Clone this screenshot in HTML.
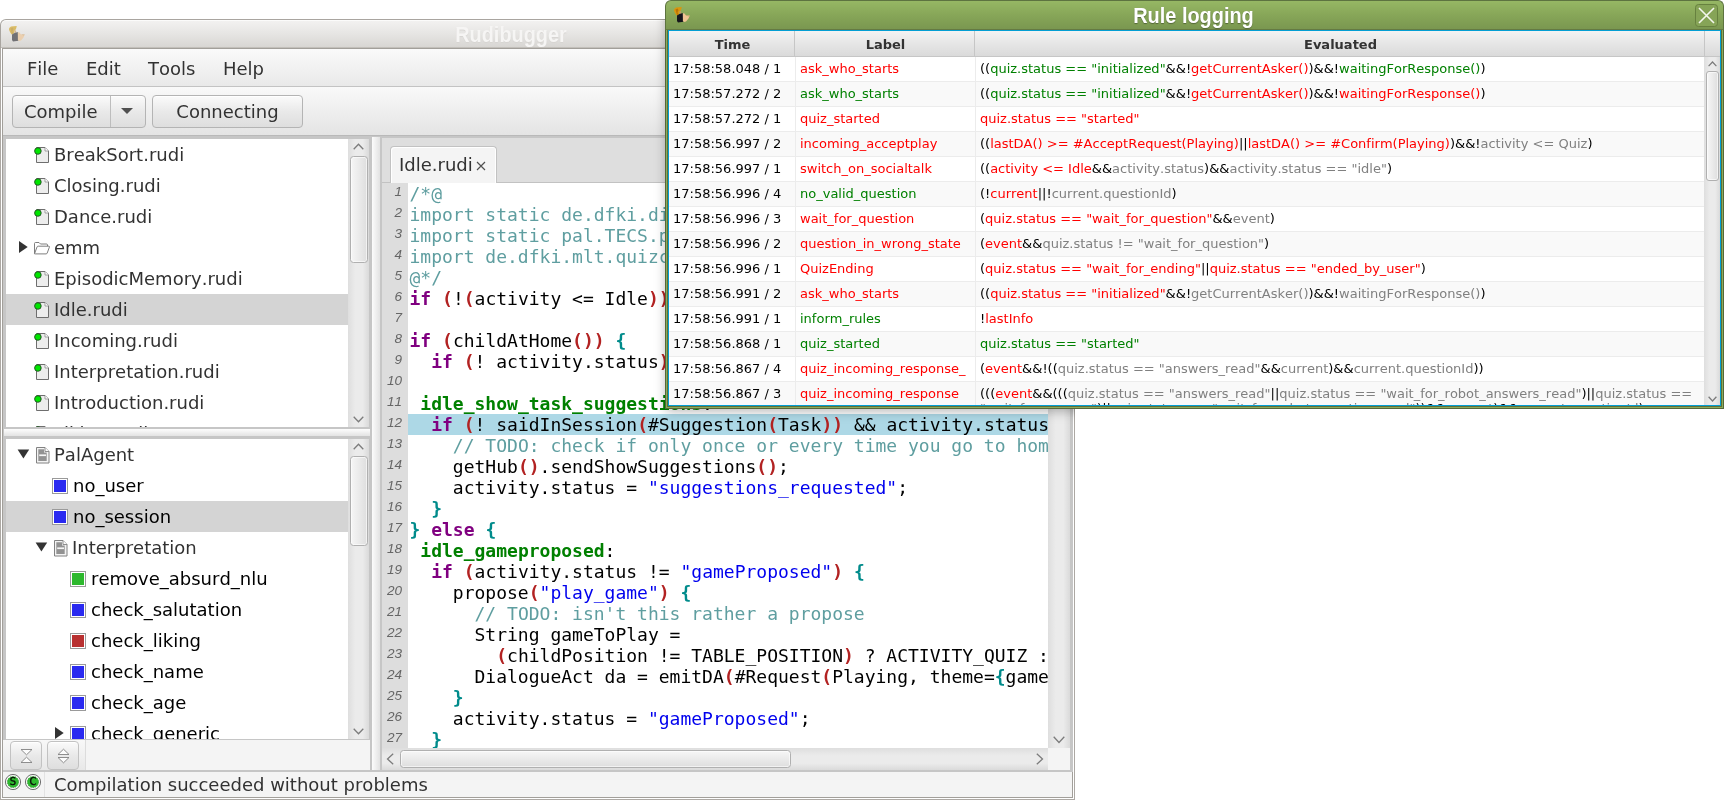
<!DOCTYPE html>
<html><head><meta charset="utf-8"><title>Rudibugger</title>
<style>
*{box-sizing:border-box}
html,body{margin:0;padding:0}
body{width:1724px;height:800px;background:#fff;position:relative;overflow:hidden;font-family:"DejaVu Sans","Liberation Sans",sans-serif;font-size:18px;color:#323232;font-kerning:none;font-variant-ligatures:none}
.abs{position:absolute}
#main{position:absolute;left:0;top:0;width:1724px;height:800px;will-change:transform}
/* ---- main window frame ---- */
#mw-title{left:0;top:19px;width:1075px;height:29px;border:1px solid #a9a5a0;border-bottom:none;border-radius:6px 6px 0 0;background:linear-gradient(#f3f2f1,#e6e5e3 50%,#d7d5d2);box-shadow:inset 0 1px 0 #fbfbfa}
#mw-title .t{position:absolute;left:0;width:1020px;top:0;height:30px;line-height:29px;text-align:center;font-family:"Liberation Sans",sans-serif;font-weight:bold;font-size:22px;color:#f6f5f4;text-shadow:0 1px 1px #d6d4d1;transform:scaleX(0.905)}
#mw-frame{left:0;top:48px;width:1075px;height:752px;border:1px solid #aca8a3;border-top:none;background:#fff;box-shadow:inset 0 0 0 1px #fff}
#menubar{left:3px;top:49px;width:1069px;height:38px;background:linear-gradient(#fafafa,#e9e9e9);border-bottom:1px solid #c3c3c3}
#menubar span{position:absolute;top:9px}
#toolbar{left:3px;top:87px;width:1069px;height:49px;background:linear-gradient(#f9f9f9,#e4e4e4);border-bottom:1px solid #b9b9b9}
.btn{position:absolute;border:1px solid #b4b4b4;border-radius:4px;background:linear-gradient(#fbfbfb,#e9e9e9 50%,#dedede);box-shadow:inset 0 1px 0 #fff;text-align:center}
/* trees */
.tree{position:absolute;background:#fff;overflow:hidden}
.row{position:absolute;left:0;height:31px;line-height:31px;white-space:nowrap}
.row.sel{background:#d4d4d4}
.row .lbl{position:absolute;top:0}
.vsb{position:absolute;background:linear-gradient(90deg,#dedede,#ebebeb 35%,#ebebeb 70%,#dadada);}
.thumb{position:absolute;border:1px solid #b0b0b0;border-radius:3.5px;background:linear-gradient(90deg,#f6f6f6,#e8e8e8 60%,#dedede);box-shadow:inset 0 0 0 1px rgba(255,255,255,.6)}
.hthumb{position:absolute;border:1px solid #b0b0b0;border-radius:3.5px;background:linear-gradient(#f6f6f6,#e8e8e8 60%,#dedede);box-shadow:inset 0 0 0 1px rgba(255,255,255,.6)}
.sq{position:absolute;width:16px;height:16px;border:1px solid #9a9a9a;box-shadow:inset 0 0 0 1px #fff}
/* code */
#code{position:absolute;left:382px;top:183px;width:666px;height:565px;background:#fff;overflow:hidden;font-family:"DejaVu Sans Mono","Liberation Mono",monospace;font-size:18px}
#gutter{position:absolute;left:0;top:0;width:26px;height:565px;background:#dddddd}
.ln{position:absolute;left:0;width:20px;text-align:right;height:21px;line-height:21px;font-family:"Liberation Sans",sans-serif;font-style:italic;font-size:13.5px;color:#666;margin-top:-2px}
.cl{position:absolute;left:27.5px;height:21px;line-height:21px;white-space:pre;color:#000}
.cm{color:#5f9ea0}.kw{color:#800080;font-weight:bold}.pr{color:#b22222;font-weight:bold}.br{color:#008b8b;font-weight:bold}.st{color:#0000ee}.lb{color:#008000;font-weight:bold}
/* log window */
#log{position:absolute;left:665px;top:0;width:1059px;height:409px;will-change:transform}
#lg-title{position:absolute;left:0;top:0;width:1059px;height:30px;border-radius:6px 6px 0 0;background:linear-gradient(#96b764,#87a658 50%,#7a9750);border:1px solid #5d7340;border-bottom:1px solid #647a42}
#lg-title .t{position:absolute;left:0;width:1055px;top:0;height:30px;line-height:29px;text-align:center;font-family:"Liberation Sans",sans-serif;font-weight:bold;font-size:22px;color:#fff;text-shadow:0 1px 1px #55683a;transform:scaleX(0.905)}
#lg-body{position:absolute;left:0;top:29px;width:1059px;height:380px;border:1px solid #55663a;border-top:none;background:#fff;box-shadow:inset 0 0 0 1px #8aac5b,inset 0 0 0 2px #5f7035}
#tbl{position:absolute;left:3px;top:30px;width:1053px;height:376px;border:1px solid #039ed3;background:#fff;overflow:hidden;font-size:13px}
.th{position:absolute;top:0;height:26px;line-height:26px;padding-top:1px;padding-left:2px;text-align:center;font-weight:bold;background:linear-gradient(#f3f3f3,#e6e6e6 50%,#dadada);border-right:1px solid #c6c6c6;border-bottom:1px solid #c6c6c6;color:#333}
.tr{position:absolute;left:0;width:1035px;height:25px;border-bottom:1px solid #ececec;background:#fff;white-space:nowrap;line-height:15px;overflow:hidden}
.tr.alt{background:#f9f9f9}
.tr span.c{position:absolute;top:4px;height:21px;overflow:hidden}
.tr .c1{left:4px;color:#000}
.tr .c2{left:131px;width:175px}
.tr .c3{left:311px;width:722px;color:#000}
.cb{position:absolute;top:0;width:1px;height:25px;background:#ececec}
.r{color:#ff0000}.g{color:#008000}.y{color:#808080}
</style></head>
<body>
<div id="main">
<div id="mw-title" class="abs"><svg width="20" height="20" viewBox="0 0 20 20" style="position:absolute;left:6px;top:4px;opacity:0.9"><path d="M2.200 4l1.800-1.600l2.400-.200l3.400-.300l-.800 3l-1.500 2l-.500 2.700l-2.500 1l-1.500-2.600l-1-2.200z" fill="#d8b85a"/><path d="M3.500 4.500l2-1l1 1.500l-1 2.500l1 2l-1.500.500z" fill="#c9a85a"/><path d="M7.500 6l1.500.500l.300 2l-1.800.700z" fill="#d4b48c"/><path d="M5 10.500l2.500-1.500l3.400-1l.600 8.700l-5.500.900l-1-1.600z" fill="#66666a"/><path d="M10.800 8.200l1.700.300l1.500 2l3.800.100l-1.300 3l-2.500 3l-2 .500l-1.100-1z" fill="#ecceaa"/><path d="M14 10.500l3.800.100l-1 .900z" fill="#d4b48c"/></svg><div class="t">Rudibugger</div></div>
<div id="mw-frame" class="abs"></div><div class="abs" style="left:1px;top:47px;width:1073px;height:1px;background:#c2bfba"></div><div class="abs" style="left:2px;top:48px;width:1071px;height:750px;border:1px solid #a29f9a;background:#f4f4f4"></div>
<div id="menubar" class="abs"><span style="left:24px">File</span><span style="left:83px">Edit</span><span style="left:145px">Tools</span><span style="left:220px">Help</span></div>
<div id="toolbar" class="abs">
 <div class="btn" style="left:9px;top:8px;width:134px;height:33px"></div>
 <div class="abs" style="left:107px;top:9px;width:1px;height:31px;background:#bdbdbd"></div>
 <div class="abs" style="left:21px;top:14px">Compile</div>
 <div class="abs" style="left:118px;top:21px;width:0;height:0;border-left:6px solid transparent;border-right:6px solid transparent;border-top:6px solid #505050"></div>
 <div class="btn" style="left:149px;top:8px;width:151px;height:33px;line-height:32px">Connecting</div>
</div>
<!--LEFT-S-->
<div class="abs" style="left:3px;top:136px;width:369px;height:636px;background:#c6c6c6"></div>
<div class="tree" id="ftree" style="left:6px;top:139px;width:363px;height:288px">
<div class="row" style="top:0px;width:343px">
<svg class="abs" style="left:27px;top:7px" width="18" height="18" viewBox="0 0 18 18"><path d="M3.5 1.5h8.5l3.5 3.5v11.500h-12z" fill="#ededed" stroke="#6e6e6e" stroke-width="1"/><path d="M12 1.500v3.500h3.500" fill="#fdfdfd" stroke="#8a8a8a" stroke-width="0.800"/><circle cx="4.900" cy="5" r="3.300" fill="#00e600" stroke="#234a23" stroke-width="0.900"/></svg>
<span class="lbl" style="left:48px">BreakSort.rudi</span></div>
<div class="row" style="top:31px;width:343px">
<svg class="abs" style="left:27px;top:7px" width="18" height="18" viewBox="0 0 18 18"><path d="M3.5 1.5h8.5l3.5 3.5v11.500h-12z" fill="#ededed" stroke="#6e6e6e" stroke-width="1"/><path d="M12 1.500v3.500h3.500" fill="#fdfdfd" stroke="#8a8a8a" stroke-width="0.800"/><circle cx="4.900" cy="5" r="3.300" fill="#00e600" stroke="#234a23" stroke-width="0.900"/></svg>
<span class="lbl" style="left:48px">Closing.rudi</span></div>
<div class="row" style="top:62px;width:343px">
<svg class="abs" style="left:27px;top:7px" width="18" height="18" viewBox="0 0 18 18"><path d="M3.5 1.5h8.5l3.5 3.5v11.500h-12z" fill="#ededed" stroke="#6e6e6e" stroke-width="1"/><path d="M12 1.500v3.500h3.500" fill="#fdfdfd" stroke="#8a8a8a" stroke-width="0.800"/><circle cx="4.900" cy="5" r="3.300" fill="#00e600" stroke="#234a23" stroke-width="0.900"/></svg>
<span class="lbl" style="left:48px">Dance.rudi</span></div>
<div class="row" style="top:93px;width:343px">
<svg class="abs" style="left:13px;top:9px" width="10" height="13" viewBox="0 0 10 13"><path d="M0 0L8.700 6L0 12z" fill="#333"/></svg>
<svg class="abs" style="left:27px;top:9px" width="18" height="15" viewBox="0 0 18 15"><path d="M1.5 12.5v-10q0-1 1-1h3.5l1.5 1.5h6q1 0 1 1v1.5" fill="none" stroke="#707070" stroke-width="0.900"/><path d="M1.5 12.8l2.5-6.8q0.3-0.8 1.2-0.8h10.6q0.9 0 0.6 0.9l-2.2 6q-0.3 0.8-1.2 0.8h-10.8q-0.9 0-0.7-0.1z" fill="#fff" stroke="#707070" stroke-width="0.900"/></svg>
<span class="lbl" style="left:48px">emm</span></div>
<div class="row" style="top:124px;width:343px">
<svg class="abs" style="left:27px;top:7px" width="18" height="18" viewBox="0 0 18 18"><path d="M3.5 1.5h8.5l3.5 3.5v11.500h-12z" fill="#ededed" stroke="#6e6e6e" stroke-width="1"/><path d="M12 1.500v3.500h3.500" fill="#fdfdfd" stroke="#8a8a8a" stroke-width="0.800"/><circle cx="4.900" cy="5" r="3.300" fill="#00e600" stroke="#234a23" stroke-width="0.900"/></svg>
<span class="lbl" style="left:48px">EpisodicMemory.rudi</span></div>
<div class="row sel" style="top:155px;width:343px">
<svg class="abs" style="left:27px;top:7px" width="18" height="18" viewBox="0 0 18 18"><path d="M3.5 1.5h8.5l3.5 3.5v11.500h-12z" fill="#ededed" stroke="#6e6e6e" stroke-width="1"/><path d="M12 1.500v3.500h3.500" fill="#fdfdfd" stroke="#8a8a8a" stroke-width="0.800"/><circle cx="4.900" cy="5" r="3.300" fill="#00e600" stroke="#234a23" stroke-width="0.900"/></svg>
<span class="lbl" style="left:48px">Idle.rudi</span></div>
<div class="row" style="top:186px;width:343px">
<svg class="abs" style="left:27px;top:7px" width="18" height="18" viewBox="0 0 18 18"><path d="M3.5 1.5h8.5l3.5 3.5v11.500h-12z" fill="#ededed" stroke="#6e6e6e" stroke-width="1"/><path d="M12 1.500v3.500h3.500" fill="#fdfdfd" stroke="#8a8a8a" stroke-width="0.800"/><circle cx="4.900" cy="5" r="3.300" fill="#00e600" stroke="#234a23" stroke-width="0.900"/></svg>
<span class="lbl" style="left:48px">Incoming.rudi</span></div>
<div class="row" style="top:217px;width:343px">
<svg class="abs" style="left:27px;top:7px" width="18" height="18" viewBox="0 0 18 18"><path d="M3.5 1.5h8.5l3.5 3.5v11.500h-12z" fill="#ededed" stroke="#6e6e6e" stroke-width="1"/><path d="M12 1.500v3.500h3.500" fill="#fdfdfd" stroke="#8a8a8a" stroke-width="0.800"/><circle cx="4.900" cy="5" r="3.300" fill="#00e600" stroke="#234a23" stroke-width="0.900"/></svg>
<span class="lbl" style="left:48px">Interpretation.rudi</span></div>
<div class="row" style="top:248px;width:343px">
<svg class="abs" style="left:27px;top:7px" width="18" height="18" viewBox="0 0 18 18"><path d="M3.5 1.5h8.5l3.5 3.5v11.500h-12z" fill="#ededed" stroke="#6e6e6e" stroke-width="1"/><path d="M12 1.500v3.500h3.500" fill="#fdfdfd" stroke="#8a8a8a" stroke-width="0.800"/><circle cx="4.900" cy="5" r="3.300" fill="#00e600" stroke="#234a23" stroke-width="0.900"/></svg>
<span class="lbl" style="left:48px">Introduction.rudi</span></div>
<div class="row" style="top:279px;width:343px">
<svg class="abs" style="left:27px;top:7px" width="18" height="18" viewBox="0 0 18 18"><path d="M3.5 1.5h8.5l3.5 3.5v11.500h-12z" fill="#ededed" stroke="#6e6e6e" stroke-width="1"/><path d="M12 1.500v3.500h3.500" fill="#fdfdfd" stroke="#8a8a8a" stroke-width="0.800"/><circle cx="4.900" cy="5" r="3.300" fill="#00e600" stroke="#234a23" stroke-width="0.900"/></svg>
<span class="lbl" style="left:48px">Liking.rudi</span></div>
<div class="vsb" style="left:342px;top:0;width:21px;height:288px">
<svg class="abs" style="left:5px;top:3.500px" width="11" height="7" viewBox="0 0 11 7"><path d="M0.7 6.2L5.5 1.2L10.3 6.2" fill="none" stroke="#7c7c7c" stroke-width="1.3"/></svg>
<div class="thumb" style="left:2px;top:17px;width:17.500px;height:107px"></div>
<svg class="abs" style="left:5px;top:277px" width="11" height="7" viewBox="0 0 11 7"><path d="M0.7 0.8L5.5 5.8L10.3 0.8" fill="none" stroke="#7c7c7c" stroke-width="1.3"/></svg>
</div></div>
<div class="abs" style="left:4px;top:428px;width:366px;height:9px;background:linear-gradient(#fdfdfd,#e3e3e3);border-top:1px solid #c6c6c6;border-bottom:1px solid #c6c6c6"></div>
<div class="tree" id="rtree" style="left:6px;top:439px;width:363px;height:300px">
<div class="row" style="top:0px;width:343px">
<svg class="abs" style="left:11px;top:10px" width="13" height="10" viewBox="0 0 13 10"><path d="M0.600 0.400h11.600L6.400 9.400z" fill="#333"/></svg>
<svg class="abs" style="left:30px;top:8px" width="14" height="17" viewBox="0 0 14 17"><path d="M0.500 0.500h8.500l4 4v11.500h-12.500z" fill="#f3f3f3" stroke="#828282" stroke-width="1"/><path d="M2.300 2.200h5.700v3.300h2.700v8.400h-8.400z" fill="#929292"/><path d="M9 0.500v4h4" fill="#fbfbfb" stroke="#828282" stroke-width="0.900"/><rect x="3.200" y="7.400" width="6.800" height="1.700" fill="#f6f6f6"/></svg>
<span class="lbl" style="left:48px">PalAgent</span>
</div>
<div class="row" style="top:31px;width:343px">
<div class="sq" style="left:46px;top:8px;background:#2a2af0"></div>
<span class="lbl" style="left:67px;color:#000">no_user</span>
</div>
<div class="row sel" style="top:62px;width:343px">
<div class="sq" style="left:46px;top:8px;background:#2a2af0"></div>
<span class="lbl" style="left:67px;color:#000">no_session</span>
</div>
<div class="row" style="top:93px;width:343px">
<svg class="abs" style="left:29px;top:10px" width="13" height="10" viewBox="0 0 13 10"><path d="M0.600 0.400h11.600L6.400 9.400z" fill="#333"/></svg>
<svg class="abs" style="left:48px;top:8px" width="14" height="17" viewBox="0 0 14 17"><path d="M0.500 0.500h8.500l4 4v11.500h-12.500z" fill="#f3f3f3" stroke="#828282" stroke-width="1"/><path d="M2.300 2.200h5.700v3.300h2.700v8.400h-8.400z" fill="#929292"/><path d="M9 0.500v4h4" fill="#fbfbfb" stroke="#828282" stroke-width="0.900"/><rect x="3.200" y="7.400" width="6.800" height="1.700" fill="#f6f6f6"/></svg>
<span class="lbl" style="left:66px">Interpretation</span>
</div>
<div class="row" style="top:124px;width:343px">
<div class="sq" style="left:64px;top:8px;background:#2db82d"></div>
<span class="lbl" style="left:85px;color:#000">remove_absurd_nlu</span>
</div>
<div class="row" style="top:155px;width:343px">
<div class="sq" style="left:64px;top:8px;background:#2a2af0"></div>
<span class="lbl" style="left:85px;color:#000">check_salutation</span>
</div>
<div class="row" style="top:186px;width:343px">
<div class="sq" style="left:64px;top:8px;background:#b83030"></div>
<span class="lbl" style="left:85px;color:#000">check_liking</span>
</div>
<div class="row" style="top:217px;width:343px">
<div class="sq" style="left:64px;top:8px;background:#2a2af0"></div>
<span class="lbl" style="left:85px;color:#000">check_name</span>
</div>
<div class="row" style="top:248px;width:343px">
<div class="sq" style="left:64px;top:8px;background:#2a2af0"></div>
<span class="lbl" style="left:85px;color:#000">check_age</span>
</div>
<div class="row" style="top:279px;width:343px">
<svg class="abs" style="left:49px;top:9px" width="10" height="13" viewBox="0 0 10 13"><path d="M0 0L8.700 6L0 12z" fill="#333"/></svg>
<div class="sq" style="left:64px;top:8px;background:#2a2af0"></div>
<span class="lbl" style="left:85px;color:#000">check_generic</span>
</div>
<div class="vsb" style="left:342px;top:0;width:21px;height:300px">
<svg class="abs" style="left:5px;top:3.500px" width="11" height="7" viewBox="0 0 11 7"><path d="M0.7 6.2L5.5 1.2L10.3 6.2" fill="none" stroke="#7c7c7c" stroke-width="1.3"/></svg>
<div class="thumb" style="left:2px;top:17px;width:17.500px;height:90px"></div>
<svg class="abs" style="left:5px;top:289px" width="11" height="7" viewBox="0 0 11 7"><path d="M0.7 0.8L5.5 5.8L10.3 0.8" fill="none" stroke="#7c7c7c" stroke-width="1.3"/></svg>
</div></div>
<div class="abs" style="left:3px;top:740px;width:82px;height:30px;background:linear-gradient(#f8f8f8,#e8e8e8)"></div>
<div class="abs" style="left:85px;top:740px;width:285px;height:30px;background:#f4f4f4;border-left:1px solid #dcdcdc"></div>
<div class="btn" style="left:10px;top:741px;width:32px;height:29px;border-radius:4px;border-color:#c2c2c2"><svg class="abs" style="left:9px;top:6px" width="13" height="16" viewBox="0 0 13 16"><path d="M1 1.500h11L6.500 6.800zM1 14.500h11L6.500 9.200z" fill="#fcfcfc" stroke="#828282" stroke-width="0.900"/></svg></div>
<div class="btn" style="left:47px;top:741px;width:32px;height:29px;border-radius:4px;border-color:#c2c2c2"><svg class="abs" style="left:9px;top:6px" width="13" height="16" viewBox="0 0 13 16"><path d="M1 6.500h11L6.500 1.200zM1 9.500h11L6.500 14.800z" fill="#fcfcfc" stroke="#828282" stroke-width="0.900"/></svg></div>
<!--LEFT-E-->
<!--RIGHT-S-->
<div class="abs" style="left:372px;top:136px;width:8px;height:636px;background:#c6c6c6"></div><div class="abs" style="left:372px;top:137px;width:8px;height:633px;background:linear-gradient(90deg,#fcfcfc,#e2e2e2)"></div>
<div class="abs" style="left:380px;top:136px;width:693px;height:636px;background:#c6c6c6"></div>
<div class="abs" style="left:382px;top:138px;width:690px;height:45px;background:#dedede;border-bottom:1px solid #c2c2c2"></div>
<div class="abs" style="left:390px;top:146px;width:107px;height:38px;border:1px solid #c2c2c2;border-bottom:none;border-radius:4px 4px 0 0;background:#f4f4f4;box-shadow:inset 1px 1px 0 #fff,inset -1px 0 0 #fff"></div>
<div class="abs" style="left:399px;top:154px;font-size:18px">Idle.rudi</div>
<svg class="abs" style="left:476px;top:160.500px" width="10" height="10" viewBox="0 0 10 10"><path d="M1 1l8 8M9 1l-8 8" stroke="#505050" stroke-width="1.150" fill="none"/></svg>
<div id="code"><div id="gutter"></div>
<div class="abs" style="left:26px;top:231px;width:640px;height:21px;background:#add8e6"></div>
<div class="ln" style="top:0px">1</div><div class="cl" style="top:0px"><span class="cm">/*@</span></div>
<div class="ln" style="top:21px">2</div><div class="cl" style="top:21px"><span class="cm">import static de.dfki.dialogue.DialogueUtils.*;</span></div>
<div class="ln" style="top:42px">3</div><div class="cl" style="top:42px"><span class="cm">import static pal.TECS.pal_tecsConstants.*;</span></div>
<div class="ln" style="top:63px">4</div><div class="cl" style="top:63px"><span class="cm">import de.dfki.mlt.quizclient.*;</span></div>
<div class="ln" style="top:84px">5</div><div class="cl" style="top:84px"><span class="cm">@*/</span></div>
<div class="ln" style="top:105px">6</div><div class="cl" style="top:105px"><span class="kw">if</span> <span class="pr">(</span>!<span class="pr">(</span>activity <= Idle<span class="pr">))</span> <span class="kw">return</span>;</div>
<div class="ln" style="top:126px">7</div><div class="cl" style="top:126px"></div>
<div class="ln" style="top:147px">8</div><div class="cl" style="top:147px"><span class="kw">if</span> <span class="pr">(</span>childAtHome<span class="pr">())</span> <span class="br">{</span></div>
<div class="ln" style="top:168px">9</div><div class="cl" style="top:168px">  <span class="kw">if</span> <span class="pr">(</span>! activity.status<span class="pr">)</span> activity.status = <span class="st">"idle"</span>;</div>
<div class="ln" style="top:189px">10</div><div class="cl" style="top:189px"></div>
<div class="ln" style="top:210px">11</div><div class="cl" style="top:210px"> <span class="lb">idle_show_task_suggestions</span>:</div>
<div class="ln" style="top:231px">12</div><div class="cl" style="top:231px">  <span class="kw">if</span> <span class="pr">(</span>! saidInSession<span class="pr">(</span>#Suggestion<span class="pr">(</span>Task<span class="pr">))</span> &amp;&amp; activity.status == <span class="st">"idle"</span><span class="pr">)</span> <span class="br">{</span></div>
<div class="ln" style="top:252px">13</div><div class="cl" style="top:252px">    <span class="cm">// TODO: check if only once or every time you go to home screen</span></div>
<div class="ln" style="top:273px">14</div><div class="cl" style="top:273px">    getHub<span class="pr">()</span>.sendShowSuggestions<span class="pr">()</span>;</div>
<div class="ln" style="top:294px">15</div><div class="cl" style="top:294px">    activity.status = <span class="st">"suggestions_requested"</span>;</div>
<div class="ln" style="top:315px">16</div><div class="cl" style="top:315px">  <span class="br">}</span></div>
<div class="ln" style="top:336px">17</div><div class="cl" style="top:336px"><span class="br">}</span> <span class="kw">else</span> <span class="br">{</span></div>
<div class="ln" style="top:357px">18</div><div class="cl" style="top:357px"> <span class="lb">idle_gameproposed</span>:</div>
<div class="ln" style="top:378px">19</div><div class="cl" style="top:378px">  <span class="kw">if</span> <span class="pr">(</span>activity.status != <span class="st">"gameProposed"</span><span class="pr">)</span> <span class="br">{</span></div>
<div class="ln" style="top:399px">20</div><div class="cl" style="top:399px">    propose<span class="pr">(</span><span class="st">"play_game"</span><span class="pr">)</span> <span class="br">{</span></div>
<div class="ln" style="top:420px">21</div><div class="cl" style="top:420px">      <span class="cm">// TODO: isn't this rather a propose</span></div>
<div class="ln" style="top:441px">22</div><div class="cl" style="top:441px">      String gameToPlay =</div>
<div class="ln" style="top:462px">23</div><div class="cl" style="top:462px">        <span class="pr">(</span>childPosition != TABLE_POSITION<span class="pr">)</span> ? ACTIVITY_QUIZ : ACTIVITY_SORT;</div>
<div class="ln" style="top:483px">24</div><div class="cl" style="top:483px">      DialogueAct da = emitDA<span class="pr">(</span>#Request<span class="pr">(</span>Playing, theme=<span class="br">{</span>gameToPlay<span class="br">}</span><span class="pr">))</span>;</div>
<div class="ln" style="top:504px">25</div><div class="cl" style="top:504px">    <span class="br">}</span></div>
<div class="ln" style="top:525px">26</div><div class="cl" style="top:525px">    activity.status = <span class="st">"gameProposed"</span>;</div>
<div class="ln" style="top:546px">27</div><div class="cl" style="top:546px">  <span class="br">}</span></div>
<div class="ln" style="top:567px">28</div><div class="cl" style="top:567px"><span class="br">}</span></div>
</div>
<div class="vsb" style="left:1048px;top:183px;width:22px;height:565px;background:linear-gradient(90deg,#dedede,#ebebeb 35%,#ebebeb 70%,#dadada)">
<svg class="abs" style="left:5px;top:553px" width="12" height="8" viewBox="0 0 12 8"><path d="M0.7 0.8L6 6.5L11.3 0.8" fill="none" stroke="#7c7c7c" stroke-width="1.3"/></svg>
</div>
<div class="abs" style="left:382px;top:748px;width:666px;height:22px;background:linear-gradient(#dedede,#ebebeb 35%,#ebebeb 70%,#dadada)">
<svg class="abs" style="left:4px;top:5px" width="8" height="12" viewBox="0 0 8 12"><path d="M7.200 0.700L1.500 6L7.200 11.300" fill="none" stroke="#7c7c7c" stroke-width="1.3"/></svg>
<div class="hthumb" style="left:18px;top:2px;width:391px;height:18px"></div>
<svg class="abs" style="left:654px;top:5px" width="8" height="12" viewBox="0 0 8 12"><path d="M0.800 0.700L6.500 6L0.800 11.300" fill="none" stroke="#7c7c7c" stroke-width="1.3"/></svg>
</div>
<div class="abs" style="left:1048px;top:748px;width:22px;height:22px;background:#f4f4f4"></div>
<!--RIGHT-E-->
<!--STATUS-S-->
<div class="abs" style="left:3px;top:772px;width:1069px;height:25px;background:#f4f4f4"></div>
<div class="abs" style="left:44px;top:772px;width:1px;height:25px;background:#e2e2e2"></div>
<svg class="abs" style="left:3px;top:772px" width="42" height="20" viewBox="0 0 42 20"><circle cx="10" cy="10" r="7.600" fill="#fafafa" stroke="#606060" stroke-width="0.900"/><circle cx="10" cy="10" r="5.600" fill="#2eb82e" stroke="#2e9a2e" stroke-width="0.800" stroke-dasharray="1.500 1"/><text x="10" y="13.300" font-size="10" font-weight="normal" stroke="#0a0a0a" stroke-width="0.300" font-family="DejaVu Sans, sans-serif" text-anchor="middle" fill="#0a0a0a">S</text><circle cx="30" cy="10" r="7.600" fill="#fafafa" stroke="#606060" stroke-width="0.900"/><circle cx="30" cy="10" r="5.600" fill="#2eb82e" stroke="#2e9a2e" stroke-width="0.800" stroke-dasharray="1.500 1"/><text x="30" y="13.300" font-size="10" font-weight="normal" stroke="#0a0a0a" stroke-width="0.300" font-family="DejaVu Sans, sans-serif" text-anchor="middle" fill="#0a0a0a">C</text></svg>
<div class="abs" style="left:54px;top:773px;height:24px;line-height:24px;white-space:nowrap">Compilation succeeded without problems</div>
<!--STATUS-E-->
<div class="abs" style="left:0;top:19px;width:1075px;height:781px;overflow:hidden;pointer-events:none"><div class="abs" style="left:667px;top:-17px;width:1055px;height:405px;box-shadow:0 3px 11px 1px rgba(0,0,0,.3)"></div></div>

</div>
<!--LOG-S-->
<div id="log">
<div id="lg-body"></div>
<div id="lg-title"><svg width="20" height="20" viewBox="0 0 20 20" style="position:absolute;left:6px;top:4px;opacity:1"><path d="M2.200 4l1.800-1.600l2.400-.200l3.400-.300l-.800 3l-1.500 2l-.500 2.700l-2.500 1l-1.500-2.600l-1-2.200z" fill="#d9960f"/><path d="M3.500 4.500l2-1l1 1.500l-1 2.500l1 2l-1.500.500z" fill="#b87408"/><path d="M7.500 6l1.500.500l.300 2l-1.800.700z" fill="#c99a68"/><path d="M5 10.500l2.500-1.500l3.400-1l.600 8.700l-5.500.900l-1-1.600z" fill="#15151c"/><path d="M10.800 8.200l1.700.300l1.500 2l3.800.100l-1.300 3l-2.500 3l-2 .500l-1.100-1z" fill="#f0c493"/><path d="M14 10.500l3.800.100l-1 .900z" fill="#c99a68"/></svg><div class="t">Rule logging</div>
<svg class="abs" style="left:1029px;top:3px" width="24" height="24" viewBox="0 0 24 24"><rect x="0.5" y="0.5" width="22" height="22" rx="3" fill="#86a457" stroke="#67813f"/><path d="M4 4l15 15M19 4l-15 15" stroke="#f4f7ee" stroke-width="1.6" fill="none"/></svg>
</div>
<div id="tbl">
<div class="th" style="left:0;width:126px">Time</div><div class="th" style="left:126px;width:180px">Label</div><div class="th" style="left:306px;width:730px">Evaluated</div><div class="th" style="left:1036px;width:16px;border-right:none"></div>
<div class="tr" style="top:26px"><span class="c c1">17:58:58.048 / 1</span><span class="c c2"><span class="r">ask_who_starts</span></span><span class="c c3">((<span class="g">quiz.status == "initialized"</span>&amp;&amp;!<span class="r">getCurrentAsker()</span>)&amp;&amp;!<span class="g">waitingForResponse()</span>)</span><div class="cb" style="left:126px"></div><div class="cb" style="left:306px"></div></div>
<div class="tr alt" style="top:51px"><span class="c c1">17:58:57.272 / 2</span><span class="c c2"><span class="g">ask_who_starts</span></span><span class="c c3">((<span class="g">quiz.status == "initialized"</span>&amp;&amp;!<span class="r">getCurrentAsker()</span>)&amp;&amp;!<span class="r">waitingForResponse()</span>)</span><div class="cb" style="left:126px"></div><div class="cb" style="left:306px"></div></div>
<div class="tr" style="top:76px"><span class="c c1">17:58:57.272 / 1</span><span class="c c2"><span class="r">quiz_started</span></span><span class="c c3"><span class="r">quiz.status == "started"</span></span><div class="cb" style="left:126px"></div><div class="cb" style="left:306px"></div></div>
<div class="tr alt" style="top:101px"><span class="c c1">17:58:56.997 / 2</span><span class="c c2"><span class="r">incoming_acceptplay</span></span><span class="c c3">((<span class="r">lastDA() &gt;= #AcceptRequest(Playing)</span>||<span class="r">lastDA() &gt;= #Confirm(Playing)</span>)&amp;&amp;!<span class="y">activity &lt;= Quiz</span>)</span><div class="cb" style="left:126px"></div><div class="cb" style="left:306px"></div></div>
<div class="tr" style="top:126px"><span class="c c1">17:58:56.997 / 1</span><span class="c c2"><span class="r">switch_on_socialtalk</span></span><span class="c c3">((<span class="r">activity &lt;= Idle</span>&amp;&amp;<span class="y">activity.status</span>)&amp;&amp;<span class="y">activity.status == "idle"</span>)</span><div class="cb" style="left:126px"></div><div class="cb" style="left:306px"></div></div>
<div class="tr alt" style="top:151px"><span class="c c1">17:58:56.996 / 4</span><span class="c c2"><span class="g">no_valid_question</span></span><span class="c c3">(!<span class="r">current</span>||!<span class="y">current.questionId</span>)</span><div class="cb" style="left:126px"></div><div class="cb" style="left:306px"></div></div>
<div class="tr" style="top:176px"><span class="c c1">17:58:56.996 / 3</span><span class="c c2"><span class="r">wait_for_question</span></span><span class="c c3">(<span class="r">quiz.status == "wait_for_question"</span>&amp;&amp;<span class="y">event</span>)</span><div class="cb" style="left:126px"></div><div class="cb" style="left:306px"></div></div>
<div class="tr alt" style="top:201px"><span class="c c1">17:58:56.996 / 2</span><span class="c c2"><span class="r">question_in_wrong_state</span></span><span class="c c3">(<span class="r">event</span>&amp;&amp;<span class="y">quiz.status != "wait_for_question"</span>)</span><div class="cb" style="left:126px"></div><div class="cb" style="left:306px"></div></div>
<div class="tr" style="top:226px"><span class="c c1">17:58:56.996 / 1</span><span class="c c2"><span class="r">QuizEnding</span></span><span class="c c3">(<span class="r">quiz.status == "wait_for_ending"</span>||<span class="r">quiz.status == "ended_by_user"</span>)</span><div class="cb" style="left:126px"></div><div class="cb" style="left:306px"></div></div>
<div class="tr alt" style="top:251px"><span class="c c1">17:58:56.991 / 2</span><span class="c c2"><span class="r">ask_who_starts</span></span><span class="c c3">((<span class="r">quiz.status == "initialized"</span>&amp;&amp;!<span class="y">getCurrentAsker()</span>)&amp;&amp;!<span class="y">waitingForResponse()</span>)</span><div class="cb" style="left:126px"></div><div class="cb" style="left:306px"></div></div>
<div class="tr" style="top:276px"><span class="c c1">17:58:56.991 / 1</span><span class="c c2"><span class="g">inform_rules</span></span><span class="c c3">!<span class="r">lastInfo</span></span><div class="cb" style="left:126px"></div><div class="cb" style="left:306px"></div></div>
<div class="tr alt" style="top:301px"><span class="c c1">17:58:56.868 / 1</span><span class="c c2"><span class="g">quiz_started</span></span><span class="c c3"><span class="g">quiz.status == "started"</span></span><div class="cb" style="left:126px"></div><div class="cb" style="left:306px"></div></div>
<div class="tr" style="top:326px"><span class="c c1">17:58:56.867 / 4</span><span class="c c2"><span class="r">quiz_incoming_response_</span><br><span class="r">wrong</span></span><span class="c c3">(<span class="r">event</span>&amp;&amp;!((<span class="y">quiz.status == "answers_read"</span>&amp;&amp;<span class="y">current</span>)&amp;&amp;<span class="y">current.questionId</span>))</span><div class="cb" style="left:126px"></div><div class="cb" style="left:306px"></div></div>
<div class="tr alt" style="top:351px"><span class="c c1">17:58:56.867 / 3</span><span class="c c2"><span class="r">quiz_incoming_response</span></span><span class="c c3">(((<span class="r">event</span>&amp;&amp;(((<span class="y">quiz.status == "answers_read"</span>||<span class="y">quiz.status == "wait_for_robot_answers_read"</span>)||<span class="y">quiz.status == </span><br><span class="y">"wait_for_answer"</span>)||<span class="y">quiz.status == "wait_for_robot_question_read"</span>))&amp;&amp;<span class="y">current</span>)&amp;&amp;<span class="y">current.questionId</span>)</span><div class="cb" style="left:126px"></div><div class="cb" style="left:306px"></div></div>
<div class="vsb" style="left:1035px;top:26px;width:16px;height:348px">
<svg class="abs" style="left:4px;top:3.500px" width="9" height="6" viewBox="0 0 9 6"><path d="M0.600 5.200L4.500 1L8.400 5.200" fill="none" stroke="#7a7a7a" stroke-width="1.2"/></svg>
<div class="thumb" style="left:2px;top:14px;width:13px;height:110px;border-radius:3px"></div>
<svg class="abs" style="left:4px;top:339px" width="9" height="6" viewBox="0 0 9 6"><path d="M0.600 0.800L4.500 5L8.400 0.800" fill="none" stroke="#7c7c7c" stroke-width="1.300"/></svg>
</div>
</div></div>
<!--LOG-E-->
</body></html>
